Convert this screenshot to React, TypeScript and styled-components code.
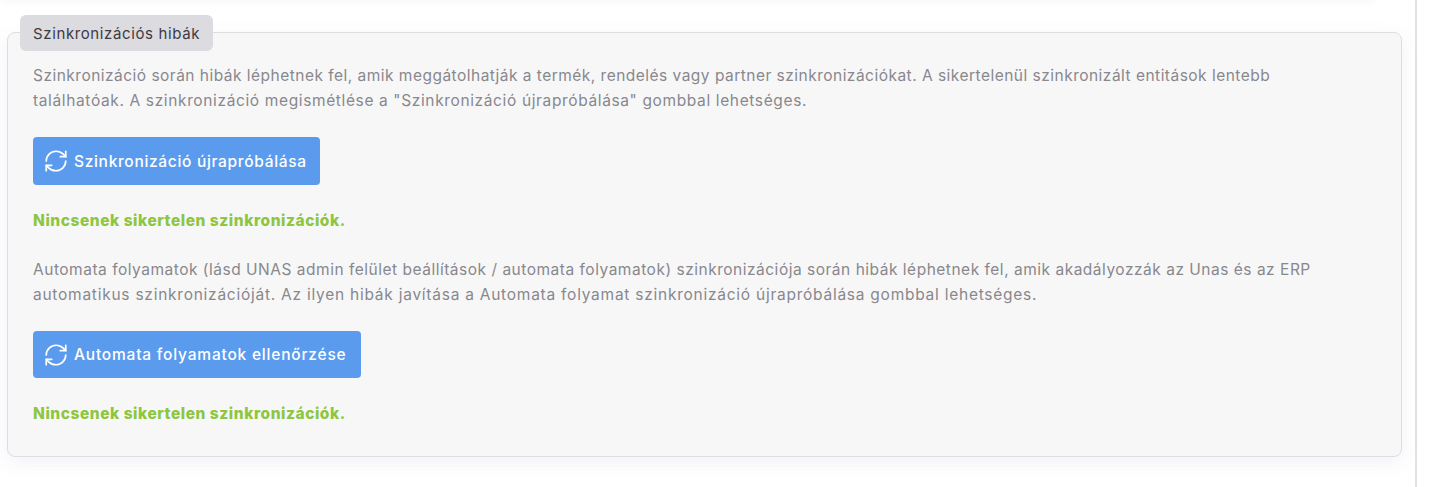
import React from 'react';
import styled, { createGlobalStyle } from 'styled-components';
import { RefreshCw } from 'lucide-react';

const Global = createGlobalStyle`
  html, body {
    margin: 0;
    padding: 0;
    background: #fff;
    overflow: hidden;
  }
  body {
    font-family: 'Inter', 'Open Sans', 'Liberation Sans', sans-serif;
  }
`;

const Page = styled.div`
  width: 1417px;
  height: 487px;
  box-sizing: border-box;
  border-right: 2px solid #e2e2e4;
  padding: 15px 13px 0 7px;
  position: relative;
  &::before {
    content: '';
    position: absolute;
    left: 0;
    right: 40px;
    top: -6px;
    height: 6px;
    box-shadow: 0 0 8px rgba(60, 60, 90, 0.07);
  }
`;

const Fieldset = styled.section`
  position: relative;
  margin-top: 17px;
  height: 425px;
  box-sizing: border-box;
  background: #f7f7f8;
  border: 1px solid #dedee2;
  border-radius: 8px;
  padding: 30px 25px 0;
  box-shadow: 0 6px 20px rgba(90, 90, 170, 0.08);
`;

const Legend = styled.div`
  position: absolute;
  left: 12px;
  top: -18px;
  height: 36px;
  padding: 0 13px;
  display: flex;
  align-items: center;
  background: #dcdbdf;
  border-radius: 6px;
  color: #3d3a44;
  font-size: 15px;
  letter-spacing: 0.62px;
`;

const Paragraph = styled.p<{ $top?: number }>`
  margin: ${(p) => p.$top ?? 0}px 0 0;
  color: #88888d;
  font-size: 15.5px;
  line-height: 25px;
  white-space: nowrap;
`;

// the lines are fitted one by one, the wrap of the text is fixed
const Line = styled.span<{ $ls: number }>`
  display: block;
  letter-spacing: ${(p) => p.$ls}px;
`;

const Button = styled.button<{ $w: number; $h: number; $ls: number }>`
  display: flex;
  align-items: center;
  gap: 5px;
  width: ${(p) => p.$w}px;
  height: ${(p) => p.$h}px;
  margin-top: 24px;
  padding: 0 10px;
  box-sizing: border-box;
  border: 0;
  border-radius: 4px;
  background: #5b9bed;
  color: #fff;
  font: 500 15.5px 'Inter', 'Open Sans', sans-serif;
  letter-spacing: ${(p) => p.$ls}px;
  white-space: nowrap;
`;

const Success = styled.div`
  margin-top: 25px;
  height: 22px;
  line-height: 22px;
  color: #8dc63f;
  font-size: 15.5px;
  font-weight: 800;
  letter-spacing: 0.54px;
`;

export default function App() {
  return (
    <>
      <Global />
      <Page>
        <Fieldset>
          <Legend>Szinkronizációs hibák</Legend>
          <Paragraph>
            <Line $ls={0.48}>
              Szinkronizáció során hibák léphetnek fel, amik meggátolhatják a termék, rendelés vagy partner szinkronizációkat. A sikertelenül szinkronizált entitások lentebb
            </Line>
            <Line $ls={0.63}>
              találhatóak. A szinkronizáció megismétlése a "Szinkronizáció újrapróbálása" gombbal lehetséges.
            </Line>
          </Paragraph>
          <Button $w={287} $h={48} $ls={0.68}>
            <RefreshCw size={26} strokeWidth={1.6} />
            Szinkronizáció újrapróbálása
          </Button>
          <Success>Nincsenek sikertelen szinkronizációk.</Success>
          <Paragraph $top={25}>
            <Line $ls={0.51}>
              Automata folyamatok (lásd UNAS admin felület beállítások / automata folyamatok) szinkronizációja során hibák léphetnek fel, amik akadályozzák az Unas és az ERP
            </Line>
            <Line $ls={0.75}>
              automatikus szinkronizációját. Az ilyen hibák javítása a Automata folyamat szinkronizáció újrapróbálása gombbal lehetséges.
            </Line>
          </Paragraph>
          <Button $w={328} $h={47} $ls={0.8}>
            <RefreshCw size={26} strokeWidth={1.6} />
            Automata folyamatok ellenőrzése
          </Button>
          <Success>Nincsenek sikertelen szinkronizációk.</Success>
        </Fieldset>
      </Page>
    </>
  );
}
